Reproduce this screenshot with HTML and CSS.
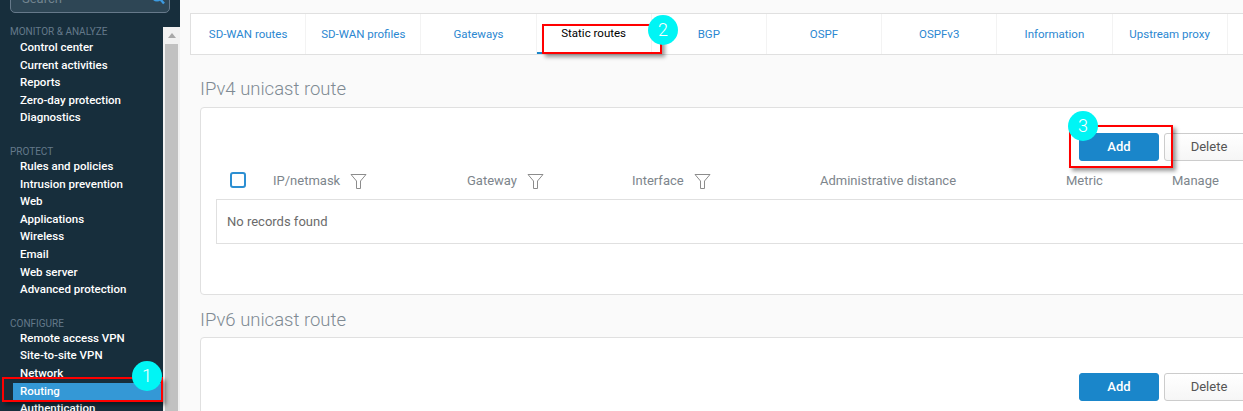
FILE: index.html
```html
<!DOCTYPE html>
<html>
  <head>
    <meta charset="utf-8">
    <meta name="viewport" content="width=device-width">
    <title>Routing</title>
    <link rel="stylesheet" href="styles.css">
  </head>
  <body>
    <aside class="sidebar">
      <div class="search">
        <span>Search</span>
        <svg width="14" height="14" viewBox="0 0 14 14"><circle cx="6" cy="5" r="4.6" fill="none" stroke="#3d9be0" stroke-width="2"/><path d="M9.5 8.5 13 12.5" stroke="#3d9be0" stroke-width="2.4"/></svg>
      </div>
      <div class="sidebar-body">
        <nav class="menu">
          <h4>MONITOR &amp; ANALYZE</h4>
          <ul>
            <li>Control center</li>
            <li>Current activities</li>
            <li>Reports</li>
            <li>Zero-day protection</li>
            <li>Diagnostics</li>
          </ul>
          <h4>PROTECT</h4>
          <ul>
            <li>Rules and policies</li>
            <li>Intrusion prevention</li>
            <li>Web</li>
            <li>Applications</li>
            <li>Wireless</li>
            <li>Email</li>
            <li>Web server</li>
            <li>Advanced protection</li>
          </ul>
          <h4>CONFIGURE</h4>
          <ul>
            <li>Remote access VPN</li>
            <li>Site-to-site VPN</li>
            <li>Network</li>
            <li class="current">Routing</li>
            <li>Authentication</li>
          </ul>
        </nav>
        <div class="scrollbar">
          <div class="arrow"></div>
          <div class="thumb"></div>
        </div>
      </div>
    </aside>

    <main class="content">
      <div class="tabs">
        <a>SD-WAN routes</a>
        <a>SD-WAN profiles</a>
        <a>Gateways</a>
        <a class="active">Static routes</a>
        <a>BGP</a>
        <a>OSPF</a>
        <a>OSPFv3</a>
        <a>Information</a>
        <a>Upstream proxy</a>
        <a>Gateway hosts</a>
      </div>

      <h2>IPv4 unicast route</h2>
      <section class="panel">
        <div class="toolbar">
          <button class="btn primary">Add</button>
          <button class="btn">Delete</button>
        </div>
        <div class="thead">
          <div><span class="checkbox"></span></div>
          <div>IP/netmask <svg class="filter" width="17" height="15" viewBox="0 0 17 15"><path d="M1 .5H16L10.5 7V14.5H6.5V7Z" fill="none" stroke="#8c8c8c"/></svg></div>
          <div>Gateway <svg class="filter" width="17" height="15" viewBox="0 0 17 15"><path d="M1 .5H16L10.5 7V14.5H6.5V7Z" fill="none" stroke="#8c8c8c"/></svg></div>
          <div>Interface <svg class="filter" width="17" height="15" viewBox="0 0 17 15"><path d="M1 .5H16L10.5 7V14.5H6.5V7Z" fill="none" stroke="#8c8c8c"/></svg></div>
          <div>Administrative distance</div>
          <div>Metric</div>
          <div>Manage</div>
        </div>
        <div class="empty">No records found</div>
      </section>

      <h2>IPv6 unicast route</h2>
      <section class="panel second">
        <div class="toolbar">
          <button class="btn primary">Add</button>
          <button class="btn">Delete</button>
        </div>
      </section>
    </main>

    <!-- annotations drawn over the screenshot -->
    <div class="mark mark-1"></div>
    <div class="mark mark-2"></div>
    <div class="mark mark-3"></div>
    <div class="step step-1">1</div>
    <div class="step step-2">2</div>
    <div class="step step-3">3</div>
  </body>
</html>
```

FILE: styles.css
```css
* {
  box-sizing: border-box;
  margin: 0;
  padding: 0;
}
html, body {
  height: 411px;
  overflow: hidden;
}
body {
  display: flex;
  position: relative;
  font-family: Roboto, "Liberation Sans", sans-serif;
  font-size: 12px;
  background: #fafafa;
}

/* sidebar */
.sidebar {
  width: 180px;
  flex: none;
  height: 411px;
  background: #172e3c;
  overflow: hidden;
}
.search {
  display: flex;
  justify-content: space-between;
  align-items: center;
  width: 160px;
  height: 30px;
  margin: -17px 0 14px 10px;
  padding: 0 4px 0 11px;
  background: #2e4655;
  border: 1px solid #66798a;
  border-radius: 5px;
  color: #72848f;
  font-size: 13px;
}
.sidebar-body {
  display: flex;
  height: 384px;
}
.menu {
  width: 163px;
  flex: none;
  padding-top: 1px;
}
.menu h4 {
  margin: 21px 0 2px 10px;
  height: 8px;
  line-height: 8px;
  font-size: 10px;
  font-weight: 400;
  color: #64798a;
}
.menu h4:first-child {
  margin: 0 0 3px 10px;
}
.menu ul {
  list-style: none;
}
.menu li {
  height: 17.6px;
  line-height: 17.6px;
  margin-left: 13px;
  padding-left: 7px;
  color: #fff;
  font-size: 11.5px;
  font-weight: 500;
  white-space: nowrap;
}
.menu li.current {
  background: #3498d6;
}
.scrollbar {
  width: 17px;
  background: #f1f1f1;
  padding: 0 2px;
}
.arrow {
  width: 0;
  margin: 6px auto 6px;
  border: 4px solid transparent;
  border-top: 0;
  border-bottom: 5px solid #a8a8a8;
}
.thumb {
  height: 400px;
  background: #c1c1c1;
}

/* content */
.content {
  flex: 1;
  min-width: 0;
  padding: 13px 0 0 10px;
  overflow: hidden;
}
.tabs {
  display: flex;
  width: 1200px;
  height: 42px;
  background: #fff;
  border: 1px solid #e0e0e0;
  border-width: 1px 0 1px 1px;
}
.tabs a {
  flex: none;
  width: 115.2px;
  line-height: 41px;
  text-align: center;
  font-size: 11.5px;
  color: #2b87d1;
  border-right: 1px solid #f3f3f3;
  white-space: nowrap;
}
.tabs a.active {
  color: #000;
  line-height: 38px;
  border-bottom: 2px solid #1a86ca;
}
h2 {
  height: 25px;
  margin: 22px 0 5px 10px;
  line-height: 25px;
  font-size: 18.5px;
  font-weight: 300;
  color: #7f8a93;
}
.panel + h2 {
  margin: 13px 0 4px 10px;
}
.panel {
  width: 1100px;
  height: 188px;
  margin-left: 10px;
  background: #fff;
  border: 1px solid #e0e0e0;
  border-radius: 4px;
}
.panel.second {
  height: 100px;
}
.toolbar {
  display: flex;
  gap: 5px;
  height: 28px;
  margin: 25px 0 0 878px;
}
.second .toolbar {
  margin-top: 35px;
}
.btn {
  width: 90px;
  height: 28px;
  padding-bottom: 2px;
  font-family: inherit;
  font-size: 13px;
  color: #555;
  background: linear-gradient(#fff, #f6f6f6);
  border: 1px solid #ccc;
  border-radius: 3px;
}
.btn.primary {
  width: 80px;
  color: #fff;
  font-weight: 500;
  background: #1a86ca;
  border-color: #1a86ca;
}
.thead {
  display: grid;
  grid-template-columns: 43px 194px 165px 188px 246px 106px 100px;
  align-items: center;
  height: 38px;
  padding-left: 29px;
  color: #7d858c;
  font-size: 13px;
}
.thead > div {
  display: flex;
  align-items: center;
  gap: 10px;
}
.checkbox {
  width: 16px;
  height: 16px;
  background: #fff;
  border: 2px solid #2c8fd2;
  border-radius: 3px;
}
.filter {
  margin-top: 2px;
}
.empty {
  height: 45px;
  margin-left: 15px;
  padding-left: 10px;
  line-height: 43px;
  color: #6b6b6b;
  font-size: 13px;
  border: 1px solid #e0e0e0;
  border-right: 0;
}

/* annotations */
.mark {
  position: absolute;
  border: 2px solid #f00;
  box-shadow: 3px 3px 4px rgba(0, 0, 0, .4);
}
.mark-1 {
  left: 2px;
  top: 377px;
  width: 161px;
  height: 25px;
}
.mark-2 {
  left: 542px;
  top: 24px;
  width: 120px;
  height: 30px;
}
.mark-3 {
  left: 1069px;
  top: 125px;
  width: 104px;
  height: 43px;
}
.step {
  position: absolute;
  width: 30px;
  height: 30px;
  line-height: 30px;
  border-radius: 50%;
  background: #00f5f5;
  color: #fff;
  text-align: center;
  font-size: 18px;
  font-weight: 300;
}
.step-1 {
  left: 132px;
  top: 361px;
}
.step-2 {
  left: 648px;
  top: 15px;
}
.step-3 {
  left: 1068px;
  top: 111px;
}
```
